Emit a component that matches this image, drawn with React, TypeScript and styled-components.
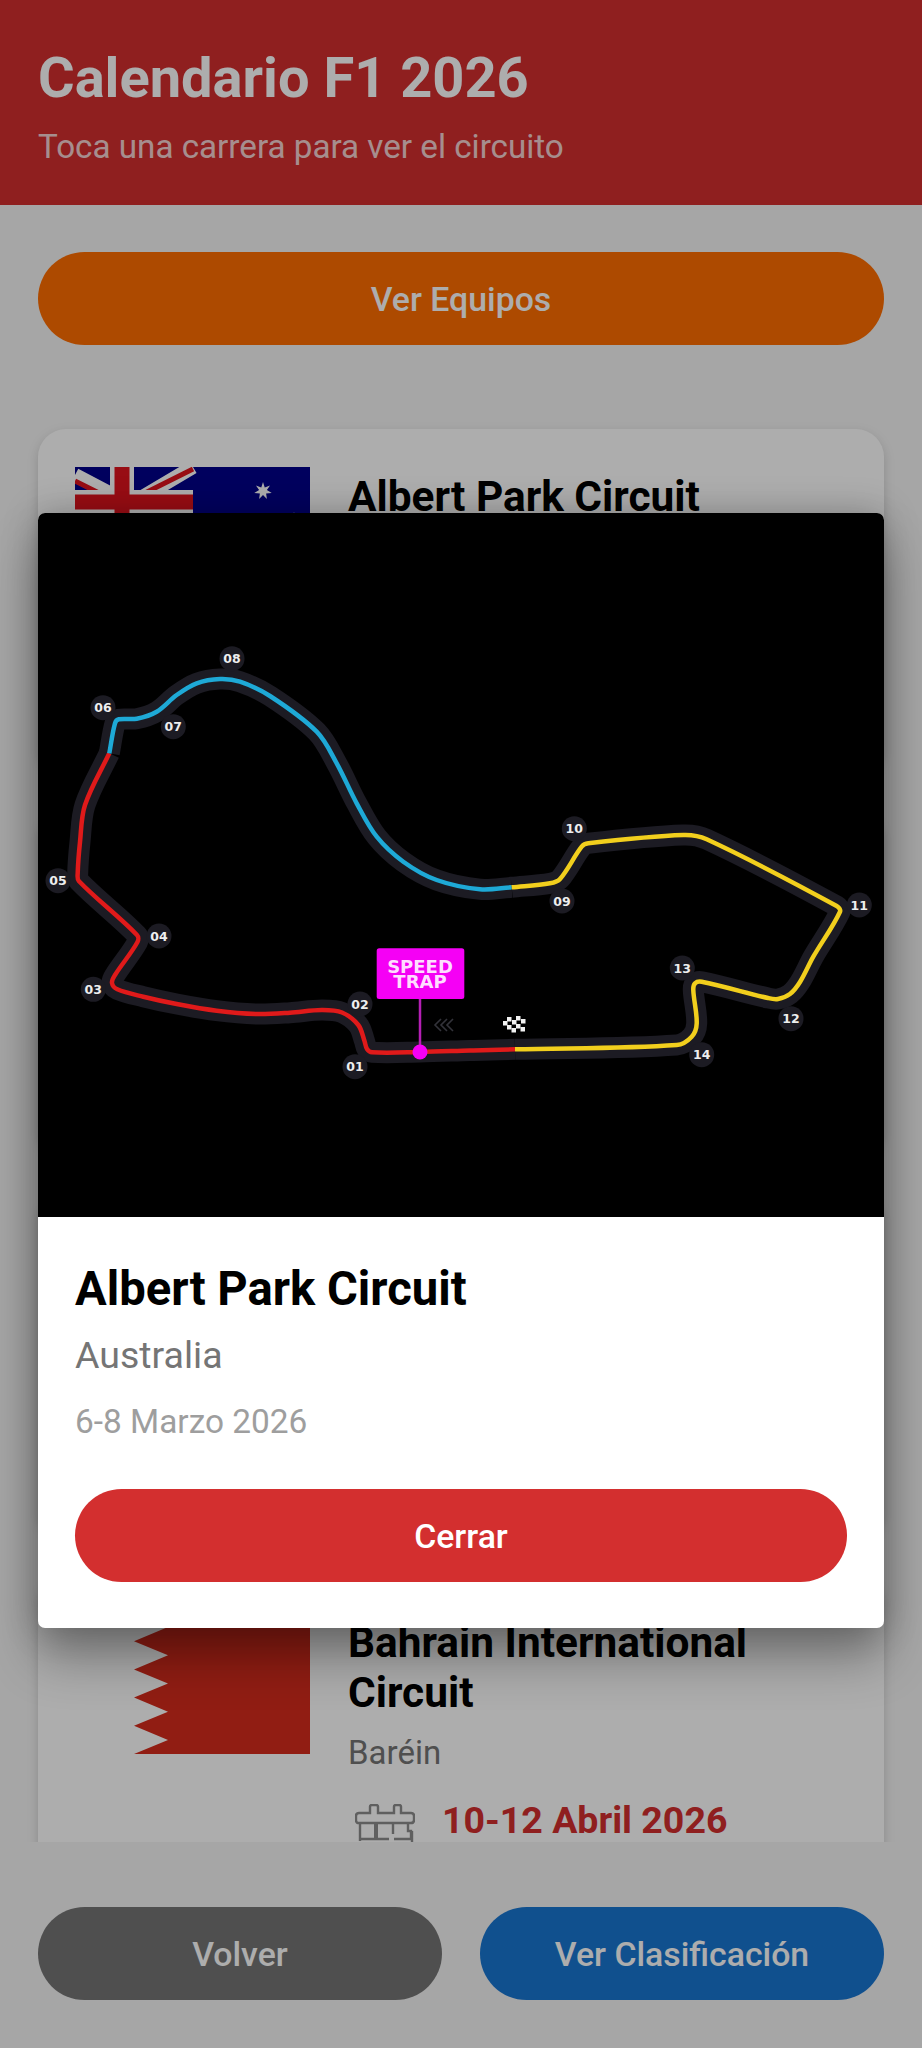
import styled, { createGlobalStyle } from 'styled-components'

const GlobalStyle = createGlobalStyle`
  html, body {
    margin: 0;
    padding: 0;
    background: #f5f5f5;
    font-family: Roboto, "Noto Sans", sans-serif;
  }
  * {
    box-sizing: border-box;
  }
`

type Point = [number, number]

// points are in page pixels, the svg viewBox starts at the top left of the image
const redTrack: Point[] = [
  [515, 1049.3], [470, 1050.5], [420, 1052], [372, 1052.3], [367, 1049], [364.5, 1041], [358.3, 1025], [342, 1012.5],
  [321.7, 1010], [290, 1012.7], [256.7, 1014], [216.7, 1010.7], [176.7, 1004], [143.3, 996.7], [117.3, 989.3],
  [112, 983], [115, 975], [137.5, 942], [137, 935], [78.8, 881], [77.7, 873.3], [80, 842], [85, 805], [109.3, 753.3],
]

const blueTrack: Point[] = [
  [109.3, 753.3], [115, 723.3], [118.8, 719.3], [136.7, 718.7], [156.7, 711.7], [176.7, 695], [196.7, 683.3], [220, 679],
  [240, 681.7], [270, 696], [316.7, 731.7], [336.7, 763.3], [356.7, 803.3], [376.7, 836.7], [403.3, 861.7],
  [436.7, 880], [480, 889.3], [511.7, 887.3],
]

const yellowTrack: Point[] = [
  [511.7, 887.3], [550, 883.3], [560, 879], [581.7, 846.7], [588.3, 843.3], [683.3, 835], [706.7, 839.3], [836.7, 906],
  [840, 911.7], [813.3, 956.7], [800, 982], [790, 994], [778, 999], [768, 998], [701.7, 981.7], [695, 983.3], [693.3, 990],
  [696.7, 1023.3], [691.7, 1036.7], [676.7, 1045], [515, 1049.3],
]

const corners: { label: string; x: number; y: number }[] = [
  { label: '01', x: 355, y: 1066.7 },
  { label: '02', x: 360, y: 1004 },
  { label: '03', x: 93.3, y: 989.3 },
  { label: '04', x: 159, y: 936 },
  { label: '05', x: 58, y: 880.7 },
  { label: '06', x: 103, y: 707.7 },
  { label: '07', x: 173.3, y: 726.7 },
  { label: '08', x: 232, y: 658.7 },
  { label: '09', x: 562, y: 901 },
  { label: '10', x: 574.3, y: 828.7 },
  { label: '11', x: 859.3, y: 905 },
  { label: '12', x: 791, y: 1018.7 },
  { label: '13', x: 682.3, y: 968 },
  { label: '14', x: 701.7, y: 1054.7 },
]

const checker: Point[] = [
  [503, 1021], [512, 1020], [521, 1019], [507, 1017], [516, 1016], [507, 1025], [516, 1024], [511.5, 1028], [520.5, 1027],
]

const smoothPath = (pts: Point[]) => {
  const tangent = (i: number): Point => {
    const a = pts[Math.max(i - 1, 0)]
    const b = pts[Math.min(i + 1, pts.length - 1)]
    const len = Math.hypot(b[0] - a[0], b[1] - a[1]) || 1
    return [(b[0] - a[0]) / len, (b[1] - a[1]) / len]
  }
  let d = `M${pts[0][0]} ${pts[0][1]}`
  for (let i = 0; i < pts.length - 1; i++) {
    const p = pts[i]
    const q = pts[i + 1]
    const len = Math.hypot(q[0] - p[0], q[1] - p[1]) / 3
    const t0 = tangent(i)
    const t1 = tangent(i + 1)
    d += ` C${p[0] + t0[0] * len} ${p[1] + t0[1] * len} ${q[0] - t1[0] * len} ${q[1] - t1[1] * len} ${q[0]} ${q[1]}`
  }
  return d
}

const CircuitMap = () => (
  <CircuitSvg viewBox="38 513 846 704">
    <TrackLine d={smoothPath(redTrack)} color="#1c1b23" width={21} />
    <TrackLine d={smoothPath(blueTrack)} color="#1c1b23" width={21} />
    <TrackLine d={smoothPath(yellowTrack)} color="#1c1b23" width={21} />
    {corners.map((c) => (
      <g key={c.label}>
        <circle cx={c.x} cy={c.y} r={12.5} fill="#1c1b23" />
        <CornerLabel x={c.x} y={c.y + 4.5}>
          {c.label}
        </CornerLabel>
      </g>
    ))}
    <TrackLine d={smoothPath(redTrack)} color="#e01a1a" width={4.5} />
    <TrackLine d={smoothPath(blueTrack)} color="#1ea9d6" width={4.5} />
    <TrackLine d={smoothPath(yellowTrack)} color="#f2cf1d" width={4.5} />
    <path d="M420 999V1052" stroke="#b41fb4" strokeWidth={2.5} fill="none" />
    <circle cx={420} cy={1052} r={7.5} fill="#f500f5" />
    <rect x={376.7} y={948.3} width={87.6} height={50.7} rx={2.5} fill="#f500f5" />
    <TrapLabel>
      <tspan x={420} y={973}>
        SPEED
      </tspan>
      <tspan x={420} y={988}>
        TRAP
      </tspan>
    </TrapLabel>
    <path
      d="M441 1019l-6 6 6 6M447 1019l-6 6 6 6M453 1019l-6 6 6 6"
      stroke="#33333a"
      strokeWidth={1.6}
      fill="none"
    />
    {checker.map(([x, y]) => (
      <rect key={`${x}-${y}`} x={x} y={y} width={4.5} height={4.5} fill="#f2f2f2" />
    ))}
  </CircuitSvg>
)

const starPoints = (cx: number, cy: number, r: number, inner: number) =>
  Array.from({ length: 14 }, (_, i) => {
    const a = (Math.PI * i) / 7 - Math.PI / 2
    const rad = i % 2 === 0 ? r : inner
    return `${cx + rad * Math.cos(a)},${cy + rad * Math.sin(a)}`
  }).join(' ')

const AustraliaFlag = () => (
  <FlagSvg viewBox="0 0 235 141">
    <rect width={235} height={141} fill="#00008b" />
    <path d="M0 8L118 70M0 70L118 0" stroke="#fff" strokeWidth={14} />
    <path d="M0 14L40 34M118 2L68 27" stroke="#e0141e" strokeWidth={5} />
    <path d="M47 0V70M0 35H118" stroke="#fff" strokeWidth={24} />
    <path d="M47 0V70M0 35H118" stroke="#e0141e" strokeWidth={15} />
    <polygon points={starPoints(188, 24, 9, 4)} fill="#fff" />
    <polygon points={starPoints(219, 50, 5, 2)} fill="#fff" />
  </FlagSvg>
)

const BahrainFlag = () => (
  <FlagSvg viewBox="0 0 235 141">
    <rect width={235} height={141} fill="#fff" />
    <polygon
      points="235,0 59,0 93,14 59,28.2 93,42.3 59,56.4 93,70.5 59,84.6 93,98.7 59,112.8 93,127 59,141 235,141"
      fill="#d62c1c"
    />
  </FlagSvg>
)

const CalendarIcon = () => (
  <IconSvg viewBox="0 0 60 60">
    <path
      d="M4 9H15V2.5Q15 1 17 1H21Q23 1 23 2.5V9H39V2.5Q39 1 41 1H44Q46 1 46 2.5V9H56Q59 9 59 12V16Q59 19 56 19H4Q1 19 1 16V12Q1 9 4 9Z"
      fill="none"
      stroke="#8c8c8c"
      strokeWidth={2.4}
    />
    <path
      d="M5 19V37M21 19V35M38 19V30M5 35H34M39 35H56V27H53V19M57 27V38"
      fill="none"
      stroke="#8c8c8c"
      strokeWidth={2.4}
    />
    <rect x={19} y={19} width={4} height={16} fill="#8c8c8c" />
  </IconSvg>
)

export default function App() {
  return (
    <Page>
      <GlobalStyle />
      <Header>
        <Title>Calendario F1 2026</Title>
        <Subtitle>Toca una carrera para ver el circuito</Subtitle>
      </Header>
      <ScrollArea>
        <PillButton $bg="#ff6d00">Ver Equipos</PillButton>
        <CardList>
          <Card $tall>
            <FlagSlot>
              <AustraliaFlag />
            </FlagSlot>
            <CardBody>
              <CardTitle>Albert Park Circuit</CardTitle>
            </CardBody>
          </Card>
          {/* these two sit fully behind the dialog */}
          <Card $tall />
          <Card $tall />
          <Card>
            <FlagSlot>
              <BahrainFlag />
            </FlagSlot>
            <CardBody>
              <CardTitle>Bahrain International Circuit</CardTitle>
              <CardCountry>Baréin</CardCountry>
              <DateRow>
                <CalendarIcon />
                <CardDate>10-12 Abril 2026</CardDate>
              </DateRow>
            </CardBody>
          </Card>
        </CardList>
      </ScrollArea>
      <BottomBar>
        <PillButton $bg="#757575">Volver</PillButton>
        <PillButton $bg="#1976d2">Ver Clasificación</PillButton>
      </BottomBar>
      <Scrim>
        <Dialog>
          <CircuitMap />
          <DialogBody>
            <DialogTitle>Albert Park Circuit</DialogTitle>
            <DialogCountry>Australia</DialogCountry>
            <DialogDate>6-8 Marzo 2026</DialogDate>
            <PillButton $bg="#d32f2f">Cerrar</PillButton>
          </DialogBody>
        </Dialog>
      </Scrim>
    </Page>
  )
}

const Page = styled.div`
  position: relative;
  display: flex;
  flex-direction: column;
  height: 100vh;
  overflow: hidden;
  background: #f5f5f5;
`

const Header = styled.header`
  flex: none;
  height: 205px;
  padding: 46px 38px 0;
  background: #d32f2f;
  color: #fff;
`

const Title = styled.h1`
  margin: 0;
  font-size: 56px;
  line-height: 64px;
  font-weight: 700;
`

const Subtitle = styled.p`
  margin: 17px 0 0;
  font-size: 33.2px;
  line-height: 40px;
  font-weight: 400;
  color: rgba(255, 255, 255, 0.8);
`

const ScrollArea = styled.main`
  flex: 1;
  min-height: 0;
  overflow: hidden;
  padding: 47px 38px 0;
`

const PillButton = styled.button<{ $bg: string }>`
  display: block;
  flex: 1;
  width: 100%;
  height: 93px;
  padding: 2px 0 0;
  border: none;
  border-radius: 47px;
  background: ${(p) => p.$bg};
  color: #fff;
  font-family: inherit;
  font-size: 33.8px;
  font-weight: 500;
`

const CardList = styled.div`
  display: flex;
  flex-direction: column;
  gap: 38px;
  margin-top: 84px;
`

const Card = styled.article<{ $tall?: boolean }>`
  display: flex;
  gap: 38px;
  flex: none;
  height: ${(p) => (p.$tall ? '344px' : 'auto')};
  padding: 38px 37px;
  background: #fff;
  border-radius: 28px;
  box-shadow: 0 4px 12px rgba(0, 0, 0, 0.16);
`

const FlagSlot = styled.div`
  flex: none;
  width: 235px;
  height: 141px;
`

const FlagSvg = styled.svg`
  display: block;
  width: 235px;
  height: 141px;
`

const CardBody = styled.div`
  flex: 1;
  min-width: 0;
  padding-top: 5px;
`

const CardTitle = styled.h2`
  margin: 0;
  font-size: 42.4px;
  line-height: 50px;
  font-weight: 700;
  color: #000;
`

const CardCountry = styled.div`
  margin-top: 15px;
  font-size: 33px;
  line-height: 40px;
  color: #757575;
`

const DateRow = styled.div`
  display: flex;
  align-items: flex-start;
  gap: 27px;
  margin: 26px 0 0 7px;
`

const IconSvg = styled.svg`
  flex: none;
  width: 60px;
  height: 60px;
  margin-top: 5px;
`

const CardDate = styled.span`
  font-size: 37.5px;
  line-height: 42px;
  font-weight: 700;
  color: #d32f2f;
`

const BottomBar = styled.footer`
  flex: none;
  display: flex;
  gap: 38px;
  height: 206px;
  padding: 65px 38px 0;
  background: #f5f5f5;
`

const Scrim = styled.div`
  position: absolute;
  inset: 0;
  padding: 513px 38px 0;
  background: rgba(0, 0, 0, 0.32);
`

const Dialog = styled.section`
  height: 1115px;
  overflow: hidden;
  background: #fff;
  border-radius: 7px;
  box-shadow: 0 30px 50px rgba(0, 0, 0, 0.33), 0 0 36px rgba(0, 0, 0, 0.22);
`

const CircuitSvg = styled.svg`
  display: block;
  width: 846px;
  height: 704px;
  background: #000;
`

const TrackLine = styled.path.attrs<{ color: string; width: number }>((p) => ({
  stroke: p.color,
  strokeWidth: p.width,
  fill: 'none',
  strokeLinejoin: 'round',
}))``

const CornerLabel = styled.text`
  font-family: "DejaVu Sans", sans-serif;
  font-size: 12.5px;
  font-weight: 700;
  fill: #eee;
  text-anchor: middle;
`

const TrapLabel = styled.text`
  font-family: "DejaVu Sans", sans-serif;
  font-size: 18px;
  font-weight: 700;
  fill: #fdf;
  text-anchor: middle;
`

const DialogBody = styled.div`
  padding: 44px 37px 0;
`

const DialogTitle = styled.h2`
  margin: 0;
  font-size: 47.2px;
  line-height: 56px;
  font-weight: 700;
  color: #000;
`

const DialogCountry = styled.div`
  margin-top: 17px;
  font-size: 37.5px;
  line-height: 42px;
  color: #757575;
`

const DialogDate = styled.div`
  margin-top: 26px;
  margin-bottom: 47px;
  font-size: 33.4px;
  line-height: 40px;
  color: #9e9e9e;
`
